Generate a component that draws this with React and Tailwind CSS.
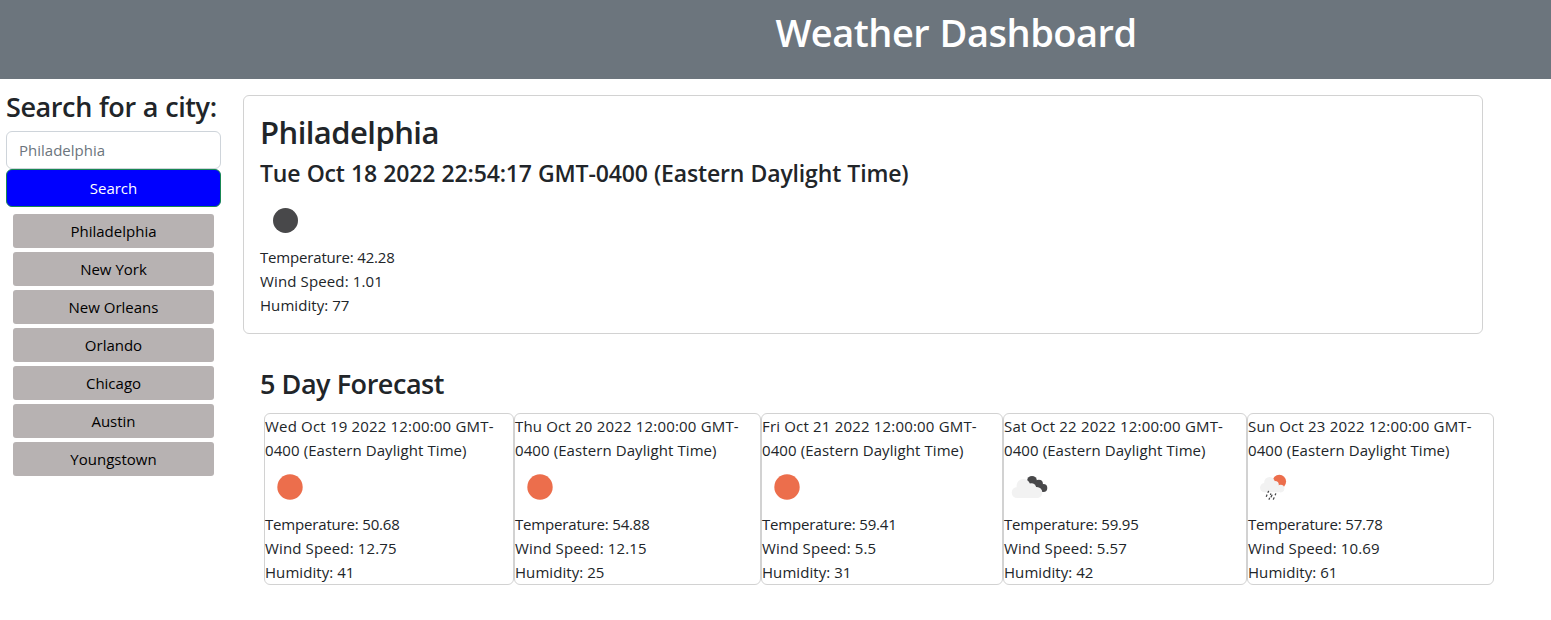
const cities = ["Philadelphia", "New York", "New Orleans", "Orlando", "Chicago", "Austin", "Youngstown"];

const days = [
  { day: "Wed Oct 19", icon: "sun", temp: "50.68", wind: "12.75", humidity: 41, width: "w-[250px]" },
  { day: "Thu Oct 20", icon: "sun", temp: "54.88", wind: "12.15", humidity: 25, width: "w-[247px]" },
  { day: "Fri Oct 21", icon: "sun", temp: "59.41", wind: "5.5", humidity: 31, width: "w-[242px]" },
  { day: "Sat Oct 22", icon: "clouds", temp: "59.95", wind: "5.57", humidity: 42, width: "w-[244px]" },
  { day: "Sun Oct 23", icon: "rain", temp: "57.78", wind: "10.69", humidity: 61, width: "w-[247px]" },
];

function WeatherIcon({ name }) {
  return (
    <svg viewBox="0 0 50 50" className="block size-[50px]">
      {name === "night" && <circle cx="25.5" cy="25.5" r="12.5" fill="#48484a" />}
      {name === "sun" && <circle cx="25" cy="25" r="12.7" fill="#ec6e4c" />}
      {name === "clouds" && (
        <>
          <g fill="#48484a">
            <circle cx="28" cy="18.8" r="4.9" />
            <circle cx="34.8" cy="21.8" r="4.1" />
            <circle cx="39.3" cy="26" r="4" />
            <path d="M24 18 L35 20 L41 26 L38 30 Z" />
          </g>
          <g fill="#f2f2f2">
            <circle cx="19.4" cy="24" r="6.9" />
            <circle cx="27.3" cy="26" r="4.8" />
            <circle cx="13.2" cy="30.5" r="5.5" />
            <circle cx="32.8" cy="30.5" r="5.5" />
            <path d="M13 25 H31 L34 30 V36 H13 Z" />
          </g>
        </>
      )}
      {name === "rain" && (
        <>
          <circle cx="31.3" cy="19.6" r="6.8" fill="#ec6e4c" />
          <g fill="#f2f2f2">
            <circle cx="21.5" cy="20.2" r="5.3" />
            <circle cx="27" cy="22.8" r="3.8" />
            <circle cx="32.6" cy="26.6" r="3.8" />
            <circle cx="16.6" cy="25.7" r="4.6" />
            <path d="M16.6 21 H28 L31 25 V30.3 H16.6 Z" />
          </g>
          <path
            d="M20.5 29.3l-.4 1.1M23.9 33.2l-.8 1.7M27.7 31.8l-.4 1M18.9 33l-.5 1.4M22.7 31.9l-.2.5M21.5 36.3l-.4.9M26 35.8l-.6 1.4"
            stroke="#48484a"
            strokeWidth="1.3"
            strokeLinecap="round"
          />
        </>
      )}
    </svg>
  );
}

function Readings({ temp, wind, humidity }) {
  return (
    <>
      <p className="tracking-[-0.18px]">Temperature: {temp}</p>
      <p className="tracking-[0.13px]">Wind Speed: {wind}</p>
      <p className="tracking-[0.06px]">Humidity: {humidity}</p>
    </>
  );
}

export default function App() {
  return (
    <div className="min-h-[620px] bg-white font-['Open_Sans',sans-serif] text-[15px] leading-6 text-[#212529]">
      <header className="h-[79px] bg-[#6c757d] pt-2 pl-[361px] text-center">
        <h1 className="text-[38px] leading-[48px] font-semibold tracking-[-0.5px] text-white [word-spacing:1px]">
          Weather Dashboard
        </h1>
      </header>
      <div className="flex items-start">
        <aside className="w-[243px] shrink-0 pt-[11px] pl-1.5">
          <h3 className="mb-[7px] text-[27px] leading-[34px] font-semibold tracking-[-0.4px] whitespace-nowrap [word-spacing:0.5px]">
            Search for a city:
          </h3>
          <div className="flex w-[215px] flex-col">
            <input
              placeholder="Philadelphia"
              className="h-[38px] rounded-md border border-[#ced4da] bg-white px-3 placeholder:text-[#6c757d]"
            />
            <button className="h-[38px] rounded-md border border-[#198754] bg-[#0000ff] text-white">Search</button>
            <div className="mt-[7px] flex flex-col gap-1 px-[7px]">
              {cities.map((city) => (
                <button key={city} className="h-[34px] rounded-[3px] bg-[#b7b2b2] text-black">
                  {city}
                </button>
              ))}
            </div>
          </div>
        </aside>
        <main className="pt-4">
          <section className="h-[239px] w-[1240px] rounded-md border border-[#d2d2d2] px-4 pt-[17px]">
            <h2 className="mb-2 text-[31px] leading-[38px] font-semibold tracking-[-0.55px]">Philadelphia</h2>
            <h4 className="mb-[7px] text-[23px] leading-[29px] font-semibold tracking-[-0.15px] [word-spacing:0.4px]">
              Tue Oct 18 2022 22:54:17 GMT-0400 (Eastern Daylight Time)
            </h4>
            <WeatherIcon name="night" />
            <Readings temp="42.28" wind="1.01" humidity={77} />
          </section>
          <section className="pt-[33px] pl-[17px]">
            <h3 className="mb-3 text-[27px] leading-[34px] font-semibold tracking-[-0.45px]">5 Day Forecast</h3>
            <div className="flex pl-1">
              {days.map(({ day, icon, width, ...readings }) => (
                <article key={day} className={`h-[172px] shrink-0 rounded-md border border-[#d2d2d2] ${width}`}>
                  <p className="tracking-[0.18px] whitespace-nowrap">{day} 2022 12:00:00 GMT-</p>
                  <p className="tracking-[0.09px] whitespace-nowrap">0400 (Eastern Daylight Time)</p>
                  <WeatherIcon name={icon} />
                  <Readings {...readings} />
                </article>
              ))}
            </div>
          </section>
        </main>
      </div>
    </div>
  );
}
